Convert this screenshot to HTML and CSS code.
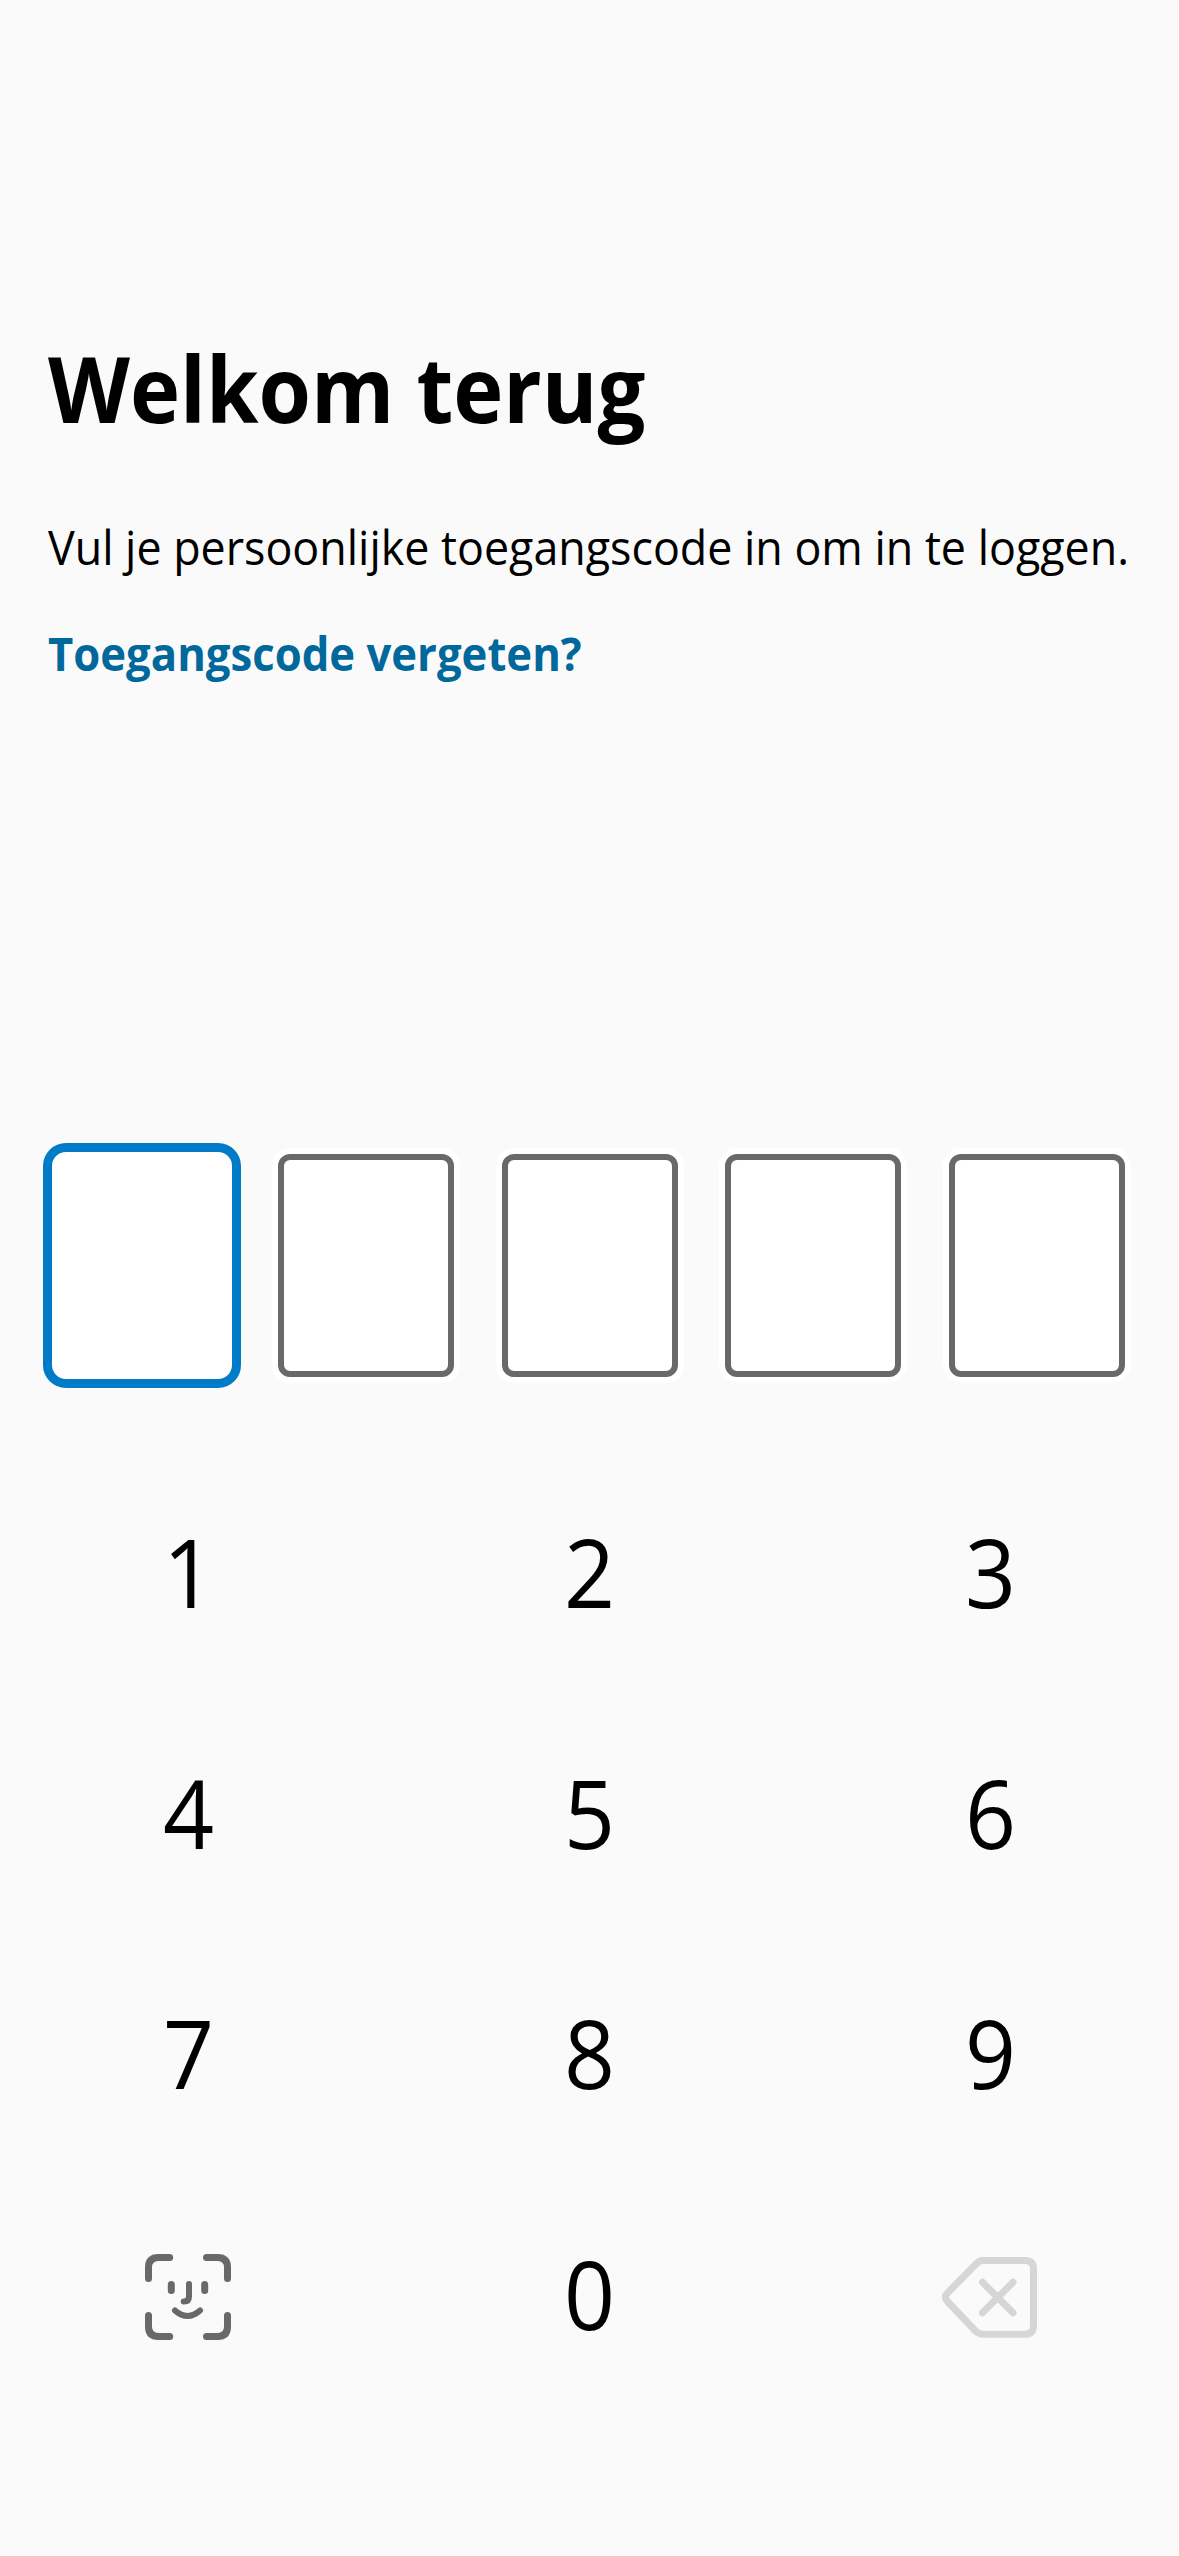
FILE: index.html
```html
<!DOCTYPE html>
<html lang="nl">
<head>
<meta charset="utf-8">
<title>Welkom terug</title>
<link rel="stylesheet" href="styles.css">
</head>
<body>
<main class="screen">
  <h1 class="title">Welkom terug</h1>
  <p class="intro">Vul je persoonlijke toegangscode in om in te loggen.</p>
  <a class="forgot">Toegangscode vergeten?</a>
  <div class="code">
    <div class="cell cell-active"></div>
    <div class="cell"></div>
    <div class="cell"></div>
    <div class="cell"></div>
    <div class="cell"></div>
  </div>
  <div class="keypad">
    <button class="key">1</button>
    <button class="key">2</button>
    <button class="key">3</button>
    <button class="key">4</button>
    <button class="key">5</button>
    <button class="key">6</button>
    <button class="key">7</button>
    <button class="key">8</button>
    <button class="key">9</button>
    <button class="key key-icon" aria-label="Gezichtsherkenning">
      <svg class="icon" viewBox="-1 0 120 115" fill="none" stroke="#696969" stroke-linecap="round">
        <path stroke-width="7" d="M18.500 38.500V27.500Q18.500 17.500 28.500 17.500H39.700M76.500 17.500H87.500Q97.500 17.500 97.500 27.500V38.500M97.500 75.500V86.500Q97.500 96.500 87.500 96.500H76.500M39.700 96.500H28.500Q18.500 96.500 18.500 86.500V75.500M41.300 44.500V50.500M74.700 44.500V50.500"/>
        <path stroke-width="6" d="M59 44V56.500Q59 61.500 54 61.500H53.700M45 70.500Q57.500 81.500 70 70.500"/>
      </svg>
    </button>
    <button class="key">0</button>
    <button class="key key-icon" aria-label="Wissen">
      <svg class="icon" viewBox="1 0 120 115" fill="none" stroke="#d6d6d6" stroke-linecap="round" stroke-linejoin="round" stroke-width="7">
        <path d="M53 20.500H95Q103.500 20.500 103.500 29V85.500Q103.500 94.200 95 94.200H53Q49 94.200 46 91.500L17.500 61.500Q13.500 57.200 17.500 53L46 24Q49 20.500 53 20.500ZM52.500 42.300L83 72.700M83 42.300L52.500 72.700"/>
      </svg>
    </button>
  </div>
</main>
</body>
</html>
```
FILE: styles.css
```css
*, *::before { box-sizing: border-box; }
body {
  margin: 0;
  background: #fafafa;
  color: #000;
  font-family: "Open Sans", sans-serif;
}
.screen {
  display: flex;
  flex-direction: column;
  align-items: flex-start;
  width: 1179px;
  height: 2556px;
  padding: 327px 48px 0;
  overflow: hidden;
}
.title, .intro, .forgot {
  margin: 0;
  white-space: nowrap;
  transform-origin: left center;
}
.title {
  font-size: 91px;
  font-weight: 700;
  line-height: 122px;
  transform: scaleX(0.932);
}
.intro {
  margin-top: 66px;
  font-size: 47px;
  line-height: 64px;
  transform: scaleX(0.953);
}
.forgot {
  margin-top: 42px;
  color: #01689b;
  font-size: 47px;
  font-weight: 700;
  line-height: 64px;
  transform: scaleX(0.929);
}
.code {
  display: flex;
  justify-content: space-between;
  width: 1083px;
  margin-top: 463px;
}
.cell {
  width: 188px;
  height: 235px;
  border: 6px solid #fff;
  border-radius: 18px;
  background: #fff;
}
.cell::before {
  content: "";
  display: block;
  height: 100%;
  border: 6px solid #696969;
  border-radius: 12px;
}
.cell-active {
  width: 198px;
  height: 245px;
  margin: -5px;
  border: 9px solid #007bc7;
  border-radius: 23px;
}
.cell-active::before { display: none; }
.keypad {
  display: grid;
  grid-template-columns: repeat(3, 281px);
  grid-auto-rows: 240.500px;
  column-gap: 120px;
  margin-top: 73px;
}
.key {
  display: flex;
  align-items: center;
  justify-content: center;
  padding: 0 0 11px;
  border: 0;
  background: none;
  color: #000;
  font: 400 96px "Open Sans", sans-serif;
  transform: scaleX(0.93);
}
.key-icon {
  padding: 0;
  transform: none;
}
.icon {
  width: 120px;
  height: 115px;
}
```
